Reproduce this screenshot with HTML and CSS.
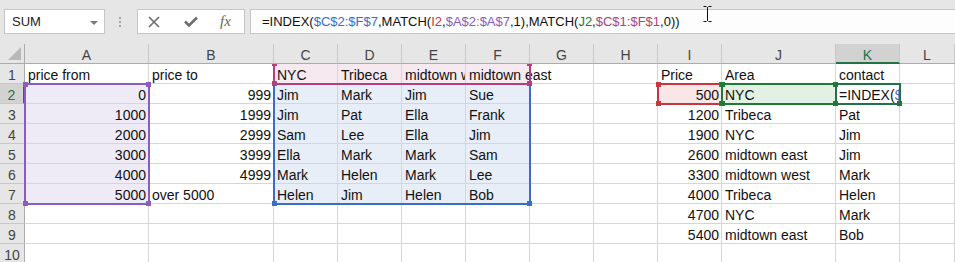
FILE: index.html
```html
<!DOCTYPE html>
<html>
<head>
    <title>Price lookup</title>
    <link rel="stylesheet" href="styles.css">
</head>
<body>
    <div class="toolbar">
        <div class="namebox">SUM<span class="caret"></span></div>
        <div class="grip"><i></i><i></i><i></i></div>
        <div class="fxbox">
            <svg class="ico-x" width="12" height="12" viewBox="0 0 12 12"><path d="M1 1 L11 11 M11 1 L1 11" /></svg>
            <svg class="ico-ok" width="14" height="11" viewBox="0 0 14 11"><path d="M1 5.5 L5 9.5 L13 1.5" /></svg>
            <span class="fx">fx</span>
        </div>
        <div class="formula">=INDEX(<span class="ref-blue">$C$2:$F$7</span>,MATCH(<span class="ref-red">I2</span>,<span class="ref-purple">$A$2:$A$7</span>,1),MATCH(<span class="ref-green">J2</span>,<span class="ref-pink">$C$1:$F$1</span>,0))</div>
        <svg class="ibeam" width="9" height="16" viewBox="0 0 9 16"><path d="M0.5 0.5 H3.5 M5.5 0.5 H8.5 M4.5 1 V15 M0.5 15.5 H3.5 M5.5 15.5 H8.5" /></svg>
    </div>

    <div class="sheet">
        <!-- column headers -->
        <div class="corner"><span class="tri"></span></div>
        <div class="h">A</div><div class="h">B</div><div class="h">C</div><div class="h">D</div>
        <div class="h">E</div><div class="h">F</div><div class="h">G</div><div class="h">H</div>
        <div class="h">I</div><div class="h">J</div><div class="h sel">K</div><div class="h">L</div>

        <!-- row 1 -->
        <div class="r">1</div>
        <div class="c">price from</div><div class="c">price to</div>
        <div class="c pink">NYC</div><div class="c pink">Tribeca</div><div class="c pink">midtown west</div><div class="c pink spill">midtown east</div>
        <div class="c"></div><div class="c"></div>
        <div class="c">Price</div><div class="c">Area</div><div class="c">contact</div><div class="c"></div>

        <!-- row 2 -->
        <div class="r sel">2</div>
        <div class="c n purple">0</div><div class="c n">999</div>
        <div class="c blue">Jim</div><div class="c blue">Mark</div><div class="c blue">Jim</div><div class="c blue">Sue</div>
        <div class="c"></div><div class="c"></div>
        <div class="c n red">500</div><div class="c green">NYC</div><div class="c">=INDEX(<span class="ref-blue">$C</span></div><div class="c"></div>

        <!-- row 3 -->
        <div class="r">3</div>
        <div class="c n purple">1000</div><div class="c n">1999</div>
        <div class="c blue">Jim</div><div class="c blue">Pat</div><div class="c blue">Ella</div><div class="c blue">Frank</div>
        <div class="c"></div><div class="c"></div>
        <div class="c n">1200</div><div class="c">Tribeca</div><div class="c">Pat</div><div class="c"></div>

        <!-- row 4 -->
        <div class="r">4</div>
        <div class="c n purple">2000</div><div class="c n">2999</div>
        <div class="c blue">Sam</div><div class="c blue">Lee</div><div class="c blue">Ella</div><div class="c blue">Jim</div>
        <div class="c"></div><div class="c"></div>
        <div class="c n">1900</div><div class="c">NYC</div><div class="c">Jim</div><div class="c"></div>

        <!-- row 5 -->
        <div class="r">5</div>
        <div class="c n purple">3000</div><div class="c n">3999</div>
        <div class="c blue">Ella</div><div class="c blue">Mark</div><div class="c blue">Mark</div><div class="c blue">Sam</div>
        <div class="c"></div><div class="c"></div>
        <div class="c n">2600</div><div class="c">midtown east</div><div class="c">Jim</div><div class="c"></div>

        <!-- row 6 -->
        <div class="r">6</div>
        <div class="c n purple">4000</div><div class="c n">4999</div>
        <div class="c blue">Mark</div><div class="c blue">Helen</div><div class="c blue">Mark</div><div class="c blue">Lee</div>
        <div class="c"></div><div class="c"></div>
        <div class="c n">3300</div><div class="c">midtown west</div><div class="c">Mark</div><div class="c"></div>

        <!-- row 7 -->
        <div class="r">7</div>
        <div class="c n purple">5000</div><div class="c">over 5000</div>
        <div class="c blue">Helen</div><div class="c blue">Jim</div><div class="c blue">Helen</div><div class="c blue">Bob</div>
        <div class="c"></div><div class="c"></div>
        <div class="c n">4000</div><div class="c">Tribeca</div><div class="c">Helen</div><div class="c"></div>

        <!-- row 8 -->
        <div class="r">8</div>
        <div class="c"></div><div class="c"></div>
        <div class="c"></div><div class="c"></div><div class="c"></div><div class="c"></div>
        <div class="c"></div><div class="c"></div>
        <div class="c n">4700</div><div class="c">NYC</div><div class="c">Mark</div><div class="c"></div>

        <!-- row 9 -->
        <div class="r">9</div>
        <div class="c"></div><div class="c"></div>
        <div class="c"></div><div class="c"></div><div class="c"></div><div class="c"></div>
        <div class="c"></div><div class="c"></div>
        <div class="c n">5400</div><div class="c">midtown east</div><div class="c">Bob</div><div class="c"></div>

        <!-- row 10 -->
        <div class="r">10</div>
        <div class="c"></div><div class="c"></div>
        <div class="c"></div><div class="c"></div><div class="c"></div><div class="c"></div>
        <div class="c"></div><div class="c"></div>
        <div class="c"></div><div class="c"></div><div class="c"></div><div class="c"></div>

        <!-- reference outlines drawn over the grid -->
        <div class="box box-purple"><i class="tl"></i><i class="tr"></i><i class="bl"></i><i class="br"></i></div>
        <div class="box box-blue"><i class="bl"></i><i class="br"></i></div>
        <div class="box box-pink"><i class="tl"></i><i class="tr"></i><i class="bl"></i><i class="br"></i></div>
        <div class="box box-red"><i class="tl"></i><i class="tr"></i><i class="bl"></i><i class="br"></i></div>
        <div class="box box-green"><i class="tl"></i><i class="tr"></i><i class="bl"></i><i class="br"></i></div>
        <div class="box box-active"><i class="br"></i></div>
    </div>
</body>
</html>
```

FILE: styles.css
```css
* {
    margin: 0;
    padding: 0;
    box-sizing: border-box;
}

body {
    font-family: 'Liberation Sans', Arial, sans-serif;
    font-size: 14px;
    color: #111;
    background: #fff;
    width: 955px;
    height: 262px;
    overflow: hidden;
}

/* formula bar */
.toolbar {
    position: relative;
    display: flex;
    align-items: flex-start;
    height: 44px;
    padding-top: 9px;
    background: #e6e6e6;
}

.namebox {
    position: relative;
    margin-left: 4px;
    width: 101px;
    height: 25px;
    padding-left: 7px;
    background: #fff;
    border: 1px solid #c6c6c6;
    font-size: 13px;
    line-height: 23px;
    color: #222;
}

.namebox .caret {
    position: absolute;
    right: 6px;
    top: 11px;
    border-left: 4px solid transparent;
    border-right: 4px solid transparent;
    border-top: 4px solid #7a7a7a;
}

.grip {
    display: flex;
    flex-direction: column;
    gap: 2px;
    width: 32px;
    padding: 8px 0 0 14px;
}

.grip i {
    display: block;
    width: 2px;
    height: 2px;
    background: #a8a8a8;
}

.fxbox {
    display: flex;
    align-items: center;
    width: 108px;
    height: 25px;
    background: #fff;
    border: 1px solid #c6c6c6;
}

.ico-x {
    margin-left: 10px;
    fill: none;
    stroke: #6f6f6f;
    stroke-width: 1.7;
}

.ico-ok {
    margin-left: 24px;
    fill: none;
    stroke: #6f6f6f;
    stroke-width: 2.6;
}

.fx {
    margin-left: 22px;
    font-family: 'Liberation Serif', serif;
    font-style: italic;
    font-size: 15px;
    color: #666;
}

.formula {
    flex: 1;
    margin-left: 5px;
    height: 25px;
    padding-left: 11px;
    background: #fdfdfd;
    border: 1px solid #c6c6c6;
    border-right: none;
    font-size: 13px;
    line-height: 23px;
    white-space: nowrap;
    overflow: hidden;
}

.ibeam {
    position: absolute;
    left: 703px;
    top: 6px;
    fill: none;
    stroke: #111;
    stroke-width: 1;
}

.ref-blue { color: #3a6dc5; }
.ref-red { color: #c8373f; }
.ref-purple { color: #8a5cbf; }
.ref-green { color: #1f7a35; }
.ref-pink { color: #b0417e; }

/* grid */
.sheet {
    position: relative;
    display: grid;
    grid-template-columns: 25px 124px 125px repeat(7, 64px) 114px 64px 55px;
    grid-auto-rows: 20px;
}

.c {
    padding: 2px 3px 0;
    line-height: 18px;
    border-right: 1px solid #d6d6d6;
    border-bottom: 1px solid #d6d6d6;
    white-space: nowrap;
    overflow: hidden;
}

.c.n {
    text-align: right;
    padding-right: 2px;
}

.c.spill {
    overflow: visible;
    position: relative;
    z-index: 1;
}

.c.purple { background: #eeeaf6; }
.c.blue { background: #e8eef8; }
.c.pink { background: #f6e9f0; }
.c.red { background: #f9e6e7; }
.c.green { background: #e3f0e4; }

.corner {
    position: relative;
    z-index: 3;
    background: #e6e6e6;
    border-right: 1px solid #ababab;
    border-bottom: 1px solid #ababab;
}

.corner .tri {
    position: absolute;
    right: 3px;
    bottom: 3px;
    border-left: 13px solid transparent;
    border-bottom: 13px solid #b8b8b8;
}

.h {
    position: relative;
    z-index: 3;
    padding-top: 2px;
    line-height: 18px;
    text-align: center;
    color: #444;
    background: #e6e6e6;
    border-right: 1px solid #c8c8c8;
    border-bottom: 1px solid #ababab;
}

.h.sel {
    background: #d2d2d2;
    color: #217346;
    border-bottom: 2px solid #217346;
}

.r {
    padding-top: 2px;
    line-height: 18px;
    text-align: center;
    color: #444;
    background: #e6e6e6;
    border-right: 1px solid #ababab;
    border-bottom: 1px solid #c8c8c8;
}

.r.sel {
    background: #d2d2d2;
    color: #217346;
    border-right: 2px solid #217346;
}

/* range outlines */
.box {
    position: absolute;
    z-index: 2;
    border: 2px solid;
}

.box i {
    position: absolute;
    width: 5px;
    height: 5px;
    background: currentColor;
}

.box .tl { left: -3px; top: -3px; }
.box .tr { right: -3px; top: -3px; }
.box .bl { left: -3px; bottom: -3px; }
.box .br { right: -3px; bottom: -3px; }

.box-purple { color: #8a5cbf; left: 24px; top: 39px; width: 126px; height: 122px; }
.box-blue { color: #3a6dc5; left: 273px; top: 39px; width: 258px; height: 122px; }
.box-pink { color: #b0417e; left: 273px; top: 18px; width: 258px; height: 23px; }
.box-red { color: #c8373f; left: 657px; top: 39px; width: 66px; height: 22px; }
.box-green { color: #1f7a35; left: 721px; top: 39px; width: 116px; height: 22px; }
.box-active { color: #217346; left: 835px; top: 39px; width: 66px; height: 22px; }
```
